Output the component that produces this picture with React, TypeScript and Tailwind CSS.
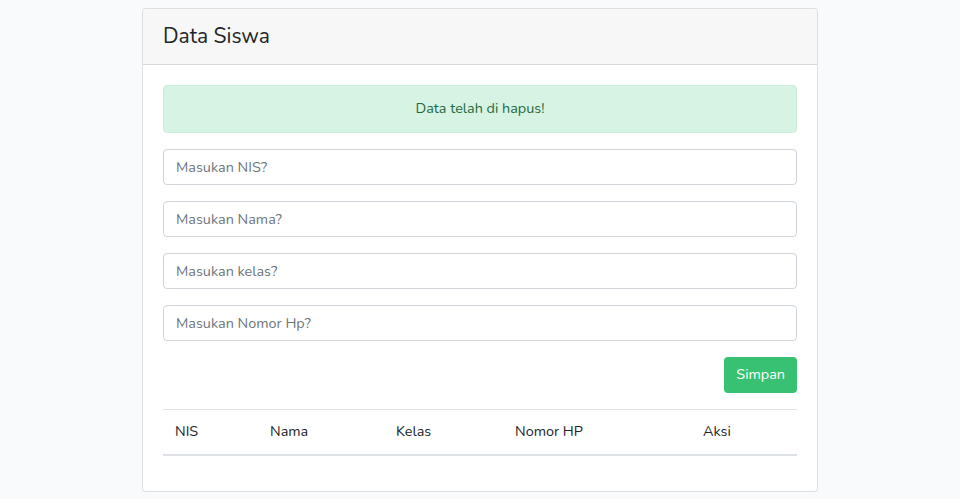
export default function App() {
  const font = { fontFamily: "Nunito, Lato, 'Noto Sans', sans-serif" };
  const inputs = ["Masukan NIS?", "Masukan Nama?", "Masukan kelas?", "Masukan Nomor Hp?"];
  return (
    <div className="min-h-[499px] bg-[#f8fafc] pt-2 text-[#212529]" style={font}>
      <div className="ml-[142px] w-[676px] rounded-[4px] border border-[rgba(0,0,0,0.125)] bg-white">
        <div className="flex h-[56px] items-center border-b border-[rgba(0,0,0,0.125)] bg-[#f7f7f7] px-5 rounded-t-[4px]">
          <h3 className="text-[21px] leading-none">Data Siswa</h3>
        </div>
        <div className="px-5 pt-5 pb-[35px]">
          <div className="mb-4 flex h-[47.5px] items-center justify-center rounded-[4px] border border-[#c7eed8] bg-[#d7f3e3] text-[14.4px] text-[#1f6b3f]">
            Data telah di hapus!
          </div>
          {inputs.map((p) => (
            <input
              key={p}
              placeholder={p}
              className="mb-4 block h-[36px] w-full rounded-[4px] border border-[#ced4da] px-3 text-[14.4px] text-[#495057] placeholder:text-[#6c757d] outline-none"
            />
          ))}
          <div className="flex justify-end">
            <button className="h-[36px] rounded-[4px] bg-[#38c172] px-3 text-[14.4px] text-white">Simpan</button>
          </div>
          <table className="mt-4 w-full border-collapse text-left text-[14.4px]">
            <thead>
              <tr className="h-[46px] border-t border-b-2 border-t-[#dee2e6] border-b-[#dee2e6]">
                <th className="w-[95px] px-3 font-normal">NIS</th>
                <th className="w-[126px] px-3 font-normal">Nama</th>
                <th className="w-[119px] px-3 font-normal">Kelas</th>
                <th className="w-[188px] px-3 font-normal">Nomor HP</th>
                <th className="px-3 font-normal">Aksi</th>
              </tr>
            </thead>
          </table>
        </div>
      </div>
    </div>
  );
}
